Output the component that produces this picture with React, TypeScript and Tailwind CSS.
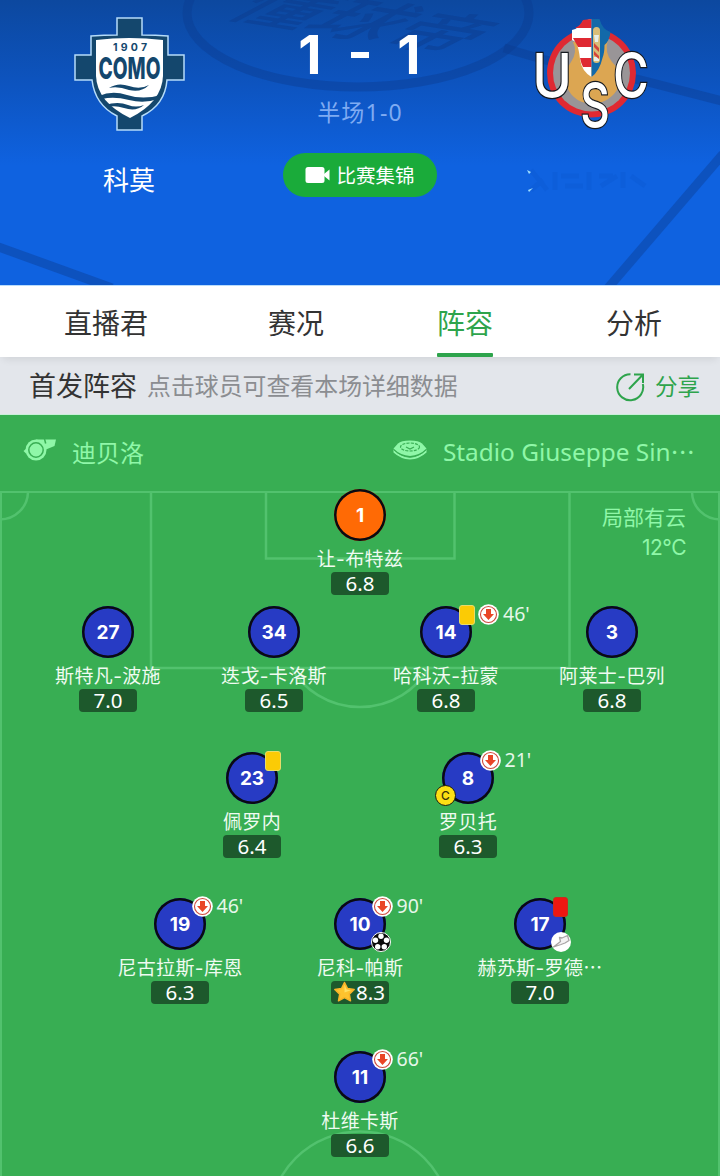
import type { ReactNode } from 'react'
import clsx from 'clsx'

type Player = {
  number: number
  name: string
  rating: string
  keeper?: boolean
  card?: 'yellow' | 'red'
  subOff?: string
  captain?: boolean
  goal?: boolean
  assist?: boolean
  star?: boolean
  cut?: boolean
}

const TABS = ['直播君', '赛况', '阵容', '分析']

const ROWS: { players: Player[]; row: string; cell: string }[] = [
  {
    row: '',
    cell: 'w-[180px]',
    players: [{ number: 1, name: '让-布特兹', rating: '6.8', keeper: true }],
  },
  {
    row: 'mt-[11px]',
    cell: 'w-[166px] nth-3:ml-1.5',
    players: [
      { number: 27, name: '斯特凡-波施', rating: '7.0' },
      { number: 34, name: '迭戈-卡洛斯', rating: '6.5' },
      { number: 14, name: '哈科沃-拉蒙', rating: '6.8', card: 'yellow', subOff: "46'" },
      { number: 3, name: '阿莱士-巴列', rating: '6.8' },
    ],
  },
  {
    row: 'mt-10',
    cell: 'w-[216px]',
    players: [
      { number: 23, name: '佩罗内', rating: '6.4', card: 'yellow' },
      { number: 8, name: '罗贝托', rating: '6.3', subOff: "21'", captain: true },
    ],
  },
  {
    row: 'mt-10',
    cell: 'w-[180px]',
    players: [
      { number: 19, name: '尼古拉斯-库恩', rating: '6.3', subOff: "46'" },
      { number: 10, name: '尼科-帕斯', rating: '8.3', subOff: "90'", goal: true, star: true },
      { number: 17, name: '赫苏斯-罗德', rating: '7.0', card: 'red', assist: true, cut: true },
    ],
  },
  {
    row: 'mt-[47px]',
    cell: 'w-[180px]',
    players: [{ number: 11, name: '杜维卡斯', rating: '6.6', subOff: "66'" }],
  },
]

function Ellipsis() {
  return (
    <span lang="zh-CN" className="inline-block leading-none font-['Noto_Sans_CJK_SC',sans-serif]">
      ⋯
    </span>
  )
}

function HeaderBackdrop() {
  return (
    <svg className="absolute inset-0" width="720" height="285" viewBox="0 0 720 285" fill="none">
      <g stroke="#0b3c8e" strokeOpacity="0.42" strokeWidth="9">
        <ellipse cx="358" cy="13" rx="171" ry="74" />
        <path d="M504 48 L545 60 L640 80 L722 101" />
        <path d="M723 154 L608 288" />
        <path d="M-4 246 L112 288" />
      </g>
      <text
        transform="matrix(1 0.16 -0.95 0.5 222 16)"
        fontSize="77"
        fontWeight="500"
        fill="#0b3c8e"
        fillOpacity="0.5"
        className="font-['Noto_Sans_CJK_SC',sans-serif]"
      >
        懂球帝
      </text>
    </svg>
  )
}

function ComoCrest() {
  return (
    <svg width="112" height="116" viewBox="73 16 112 116">
      <path
        d="M117 18h25v17q14 0 26 1v19h16v25h-17q-2 25-25 36v14h-25v-14q-22-11-25-36H75V55h16V36q13-1 26-1z"
        fill="#14476d"
        stroke="#b5dcfa"
        strokeWidth="1.5"
      />
      <path d="M96 40q33-4 67 0v36q-1 26-33 42q-33-16-34-42z" fill="#fff" />
      <g fill="#14476d" fontWeight="700" textAnchor="middle">
        <text x="130" y="51" fontSize="10.5" textLength="34" className="font-[Inter,sans-serif]">1907</text>
        <text
          transform="translate(129.5 79) scale(0.72 1)"
          fontSize="30"
          fontWeight="800"
          textLength="86"
          lengthAdjust="spacingAndGlyphs"
          className="font-[Inter,sans-serif]"
        >
          COMO
        </text>
      </g>
      <g fill="#14476d">
        <path d="M109 88q9-6 20-2q11 4 20-1q-8 8-20 5q-11-4-20-2z" />
        <path d="M99 96q13-6 28-1q16 5 34 0l-3 4q-14 5-29 1q-15-4-27-1z" />
        <path d="M105 105q13-4 23 0q8 3 16 0q-8 7-20 3q-9-3-16-1z" />
      </g>
    </svg>
  )
}

function CremoneseCrest() {
  return (
    <svg className="overflow-visible" width="116" height="114" viewBox="533 16 116 114">
      <circle cx="591.5" cy="73" r="44.5" fill="#df2932" />
      <circle cx="591.5" cy="73" r="38.5" fill="#999597" />
      <path
        d="M573 42q5 10-2 20q-6 8-5 20q2 14 16 20q10 3 20 0q15-6 18-20q1-12-8-20q-8-10-4-22z"
        fill="#dca652"
      />
      <path d="M591.5 77q-10-6-11.500-18q-1-10-4-17l-4-2V30q7-1 11-9l8.500-2z" fill="#fff" />
      <path d="M583 20l8.500-1v9H575q6-3 8-8zM573 38h18.500v9H578zM580 58h11.500v9h-8.500q-2-4-3-9z" fill="#df2932" />
      <path d="M591.500 19h8q3 11 11 13q-1 9-6 13q0 8-2 13q-3 13-11 19z" fill="#1269a9" />
      <rect x="593" y="27" width="7" height="36" rx="3.500" fill="#d9bd78" />
      <path d="M594 35h5l-1 7h-3zM594 57h5v4h-5z" fill="#e8eee8" />
      <path d="M594 43l5 5v4l-5-5zM594 51l5 5v3l-5-4z" fill="#d4433a" />
      <g
        fill="#fff"
        stroke="#161a20"
        strokeWidth="2.500"
        paintOrder="stroke"
        fontSize="61"
        fontWeight="500"
        textAnchor="middle"
        className="font-[Inter,sans-serif]"
      >
        <text transform="translate(552 97) scale(0.88 1)">U</text>
        <text transform="translate(595 127) scale(0.75 1)">S</text>
        <text transform="translate(631 97) scale(0.8 1)">C</text>
      </g>
    </svg>
  )
}

function MatchHeader() {
  return (
    <header className="relative h-[285px] overflow-hidden bg-[linear-gradient(180deg,#0c489f_0%,#0d54c0_30%,#0f62e0_58%,#0f62e0_100%)]">
      <HeaderBackdrop />
      <div className="relative flex text-white">
        <div className="flex w-[258px] flex-col items-center pt-4">
          <ComoCrest />
          <div className="mt-[29px] text-[26px] leading-[40px]">科莫</div>
        </div>
        <div className="flex w-[204px] flex-col items-center">
          <div className="mt-[25px] flex h-[60px] items-center gap-[26px] text-[54px] leading-[60px] font-bold">
            <span className="w-[30px] text-center">1</span>
            <span className="h-[6px] w-[18px] bg-white" />
            <span className="w-[30px] pr-0.5 text-center">1</span>
          </div>
          <div className="mt-[10px] text-[23px] leading-[34px] tracking-[1.2px] text-[#7fabf2] font-['Noto_Sans','Noto_Sans_CJK_SC',sans-serif]">
            半场1-0
          </div>
          <button className="mt-[24px] flex h-11 w-[154px] items-center justify-center gap-1.5 rounded-full bg-[#1aab3a] text-[19.500px]">
            <svg width="25" height="18" viewBox="0 0 25 18" fill="#fff">
              <rect x="0.500" y="1" width="19" height="16" rx="2.500" />
              <path d="M19 8l5.500-4.500v11L19 10z" />
            </svg>
            <span className="pt-[3px]">比赛集锦</span>
          </button>
        </div>
        <div className="flex w-[258px] flex-col items-center pt-4">
          <CremoneseCrest />
          <svg className="mt-[34px]" width="128" height="34" viewBox="0 0 128 34">
            <path
              d="M4 6l16 20M4 26l12-10M28 8v18M34 12h18M38 22h18M62 8v18M72 12h14M74 22l16-10M96 8v16M104 12l14 10"
              stroke="#0a55ce"
              strokeOpacity="0.3"
              strokeWidth="5"
              fill="none"
            />
            <path d="M0 6l4 2-2 2zM1 26l5-2-4 4z" fill="#9fe0ff" />
          </svg>
        </div>
      </div>
    </header>
  )
}

function ShareIcon() {
  return (
    <svg width="30" height="30" viewBox="0 0 30 30" fill="none" stroke="#2ea44c" strokeWidth="2">
      <path d="M15.500 2.200A13 13 0 1 0 27.800 12" />
      <path d="M14 17L27.500 3M19 2.500h9V11" />
    </svg>
  )
}

function WhistleIcon() {
  return (
    <svg className="-mt-1" width="34" height="22" viewBox="0 0 34 22">
      <path d="M13 0.500h20l-1.500 6.500-8.500 3.500h-8z" fill="#8ff7a8" />
      <circle cx="13" cy="11" r="10.500" fill="#8ff7a8" />
      <path d="M3.500 9.500l-3 2.500 2.500 2.500z" fill="#8ff7a8" />
      <circle cx="13" cy="11" r="7.200" fill="none" stroke="#39ae54" strokeWidth="1.500" />
      <path d="M21.500 0l1.200 4.500" stroke="#39ae54" strokeWidth="1.500" />
    </svg>
  )
}

function StadiumIcon() {
  return (
    <svg className="-mt-1" width="34" height="20" viewBox="0 0 34 20" fill="#8ff7a8">
      <path d="M17 0.500q9 0 12 3l4.500 5q-7 7-16.500 7.500q-9.500-.5-16.500-7.500l4.500-5q3-3 12-3z" />
      <path d="M0.500 9.500q7 7.500 16.500 8q9.500-.5 16.500-8v3q-7 6.500-16.500 7q-9.500-.5-16.500-7z" />
      <g fill="none" stroke="#39ae54">
        <path d="M1 10q7 6.800 16 7.200q9-.4 16-7.200" strokeWidth="1" />
        <ellipse cx="17" cy="7" rx="9.500" ry="4" strokeWidth="1.200" strokeDasharray="3 1.200" />
        <path d="M13 7l4 2 4-2" strokeWidth="1.200" />
      </g>
    </svg>
  )
}

function SubOffIcon() {
  return (
    <svg className="shrink-0" width="21" height="21" viewBox="0 0 21 21">
      <circle cx="10.500" cy="10.500" r="10.300" fill="#fff" />
      <circle cx="10.500" cy="10.500" r="8" fill="#fff" stroke="#cf4a3d" strokeWidth="1.100" />
      <path d="M8 5h5v5h3l-5.500 6L5 10h3z" fill="#e94526" />
    </svg>
  )
}

function BallIcon() {
  return (
    <svg width="20" height="20" viewBox="0 0 20 20">
      <circle cx="10" cy="10" r="9.500" fill="#0b0b0b" stroke="#fff" />
      <g fill="#fff">
        <circle cx="10" cy="4.200" r="2.700" />
        <circle cx="15.500" cy="8.300" r="2.700" />
        <circle cx="13.300" cy="14.800" r="2.700" />
        <circle cx="6.700" cy="14.800" r="2.700" />
        <circle cx="4.500" cy="8.300" r="2.700" />
      </g>
      <path d="M10 7.500l2.500 1.800-.9 2.900H8.400l-.9-2.900z" fill="#0b0b0b" />
    </svg>
  )
}

function BootIcon() {
  return (
    <svg width="20" height="20" viewBox="0 0 20 20">
      <circle cx="10" cy="10" r="10" fill="#fff" />
      <path
        d="M2.500 15L9.500 9.500 8.500 5.500 11 6 16.500 3.500 18 8.500 14 11 10 12.500z"
        fill="#f4f2f3"
        stroke="#a9a4a5"
        strokeWidth="1.300"
        strokeLinejoin="round"
      />
    </svg>
  )
}

function StarIcon() {
  return (
    <svg className="-ml-0.5 shrink-0" width="23" height="22" viewBox="0 0 23 22">
      <path
        d="M11.500 1.500l3 6 6.700 1-4.900 4.600 1.200 6.700-6-3.200-6 3.200 1.200-6.700L1.800 8.500l6.700-1z"
        fill="#fdc32e"
        stroke="#f9b428"
        strokeWidth="1.500"
        strokeLinejoin="round"
      />
      <path d="M11.500 3.500l2 5 4.500.7-6.500 2.300z" fill="#ffdf62" />
    </svg>
  )
}

function PitchLines() {
  return (
    <svg className="absolute inset-0" width="720" height="761" viewBox="0 415 720 761" fill="none">
      <g stroke="#52c26e" strokeWidth="2.500">
        <path d="M1 1176V492H719V1176" strokeWidth="2" />
        <path d="M151 492V668H569.500V492" />
        <path d="M266 492V558.500H454.500V492" />
        <path d="M0 519.500A28 28 0 0 0 28 492M692 492A28 28 0 0 0 720 519.500" />
        <path d="M291 668A80.500 80.500 0 0 0 429 668" />
        <circle cx="360" cy="1222.500" r="91" />
      </g>
    </svg>
  )
}

function Badge({ className, children }: { className: string; children: ReactNode }) {
  return <span className={clsx('absolute', className)}>{children}</span>
}

function PlayerCell({ player, className }: { player: Player; className: string }) {
  return (
    <div className={clsx('flex flex-col items-center', className)}>
      <div
        className={clsx(
          "relative flex size-[52px] items-center justify-center rounded-full pt-0.5 text-[19px] font-bold inset-ring-[2.5px] inset-ring-[#0a0a12] font-[Inter,sans-serif]",
          player.keeper ? 'bg-[#ff6a05]' : 'bg-[#273bc4]'
        )}
      >
        {player.number}
        {(player.card || player.subOff) && (
          <div
            className={clsx(
              'absolute -top-[2px] flex h-[21px] items-center text-[19.500px] font-normal',
              player.card ? 'left-[39px]' : 'left-[37.500px]'
            )}
          >
            {player.card && (
              <span
                className={clsx(
                  'mr-[3px] h-5 shrink-0 rounded-[3px] border',
                  player.card === 'yellow'
                    ? 'w-4 border-[#e8dc6a] bg-[#fbcb05]'
                    : 'w-[15px] border-[#c92c1c] bg-[#ee1712]'
                )}
              />
            )}
            {player.subOff && (
              <>
                <SubOffIcon />
                <span className="ml-1 pb-0.5 font-['Noto_Sans',sans-serif] text-[#e6f7ea]">{player.subOff}</span>
              </>
            )}
          </div>
        )}
        {player.captain && (
          <Badge className="-bottom-[2px] -left-[7px] flex size-[21px] items-center justify-center rounded-full border-[1.500px] border-[#1c1c10] bg-[#fddf14] text-xs font-medium text-[#3a3408]">
            C
          </Badge>
        )}
        {player.goal && <Badge className="-right-[5px] -bottom-[2px]"><BallIcon /></Badge>}
        {player.assist && <Badge className="-right-[5px] -bottom-[2px]"><BootIcon /></Badge>}
      </div>
      <div className="flex h-[31px] text-[19px] leading-[37px] tracking-[0.35px] whitespace-nowrap text-[#effbf1]">
        {player.name}
        {player.cut && <span><Ellipsis /></span>}
      </div>
      <div className="flex h-[23px] w-[58px] items-start justify-center rounded-[4px] bg-[#1d592c] text-[20.500px] leading-[22px] font-['Noto_Sans',sans-serif]">
        {player.star && <StarIcon />}
        {player.rating}
      </div>
    </div>
  )
}

export default function App() {
  return (
    <div className="h-[1176px] w-[720px] overflow-hidden bg-white font-[Inter,'Noto_Sans_CJK_SC',sans-serif]">
      <MatchHeader />

      {/* Tabs */}
      <nav className="relative flex h-[72px] gap-[113px] border-t border-[#b9dcfb] bg-white pl-16 text-[28px] text-[#333] shadow-[0_5px_8px_-3px_rgba(0,0,0,0.09)]">
        {TABS.map((tab, i) => (
          <button
            key={tab}
            className={clsx(
              'flex flex-col items-center',
              i === 0 && 'mr-[7px]',
              tab === '阵容' && 'text-[#2ea44c]'
            )}
          >
            <span className="h-[67px] leading-[76px]">{tab}</span>
            {tab === '阵容' && <span className="h-1 w-14 rounded-[1px] bg-[#2ea44c]" />}
          </button>
        ))}
      </nav>

      {/* Lineup title */}
      <div className="flex h-[58px] items-center border-b border-[#c9efd9] bg-[#e3e6eb] pt-0.5 pr-5 pl-[29px]">
        <h2 className="pt-0.5 text-[27px] text-[#333]">首发阵容</h2>
        <p className="ml-[10px] text-[23.900px] text-[#8b8d91]">点击球员可查看本场详细数据</p>
        <button className="ml-auto flex items-center gap-2.5 text-[22.500px] text-[#2ea44c]">
          <ShareIcon />
          分享
        </button>
      </div>

      <main className="relative h-[761px] bg-[#38ae53]">
        <PitchLines />
        <div className="relative flex h-[74px] items-center pl-[23px] text-[24px] text-[#8ff7a8]">
          <WhistleIcon />
          <span className="ml-[15px] pt-[3px]">迪贝洛</span>
          <div className="ml-auto flex items-center pr-[25px]">
            <StadiumIcon />
            <span className="ml-4 pt-px text-[24.400px] font-['Noto_Sans',sans-serif]">
              Stadio Giuseppe Sin<Ellipsis />
            </span>
          </div>
        </div>
        <div className="absolute top-[88px] right-[34px] text-right text-[21px] leading-[30px] text-[#8ff7a8]">
          <div>局部有云</div>
          <div className="tracking-[-0.5px]">12°C</div>
        </div>
        <div className="relative text-white">
          {ROWS.map(({ players, row, cell }, i) => (
            <div key={i} className={clsx('flex justify-center', row)}>
              {players.map((p) => (
                <PlayerCell key={p.number} player={p} className={cell} />
              ))}
            </div>
          ))}
        </div>
      </main>
    </div>
  )
}
